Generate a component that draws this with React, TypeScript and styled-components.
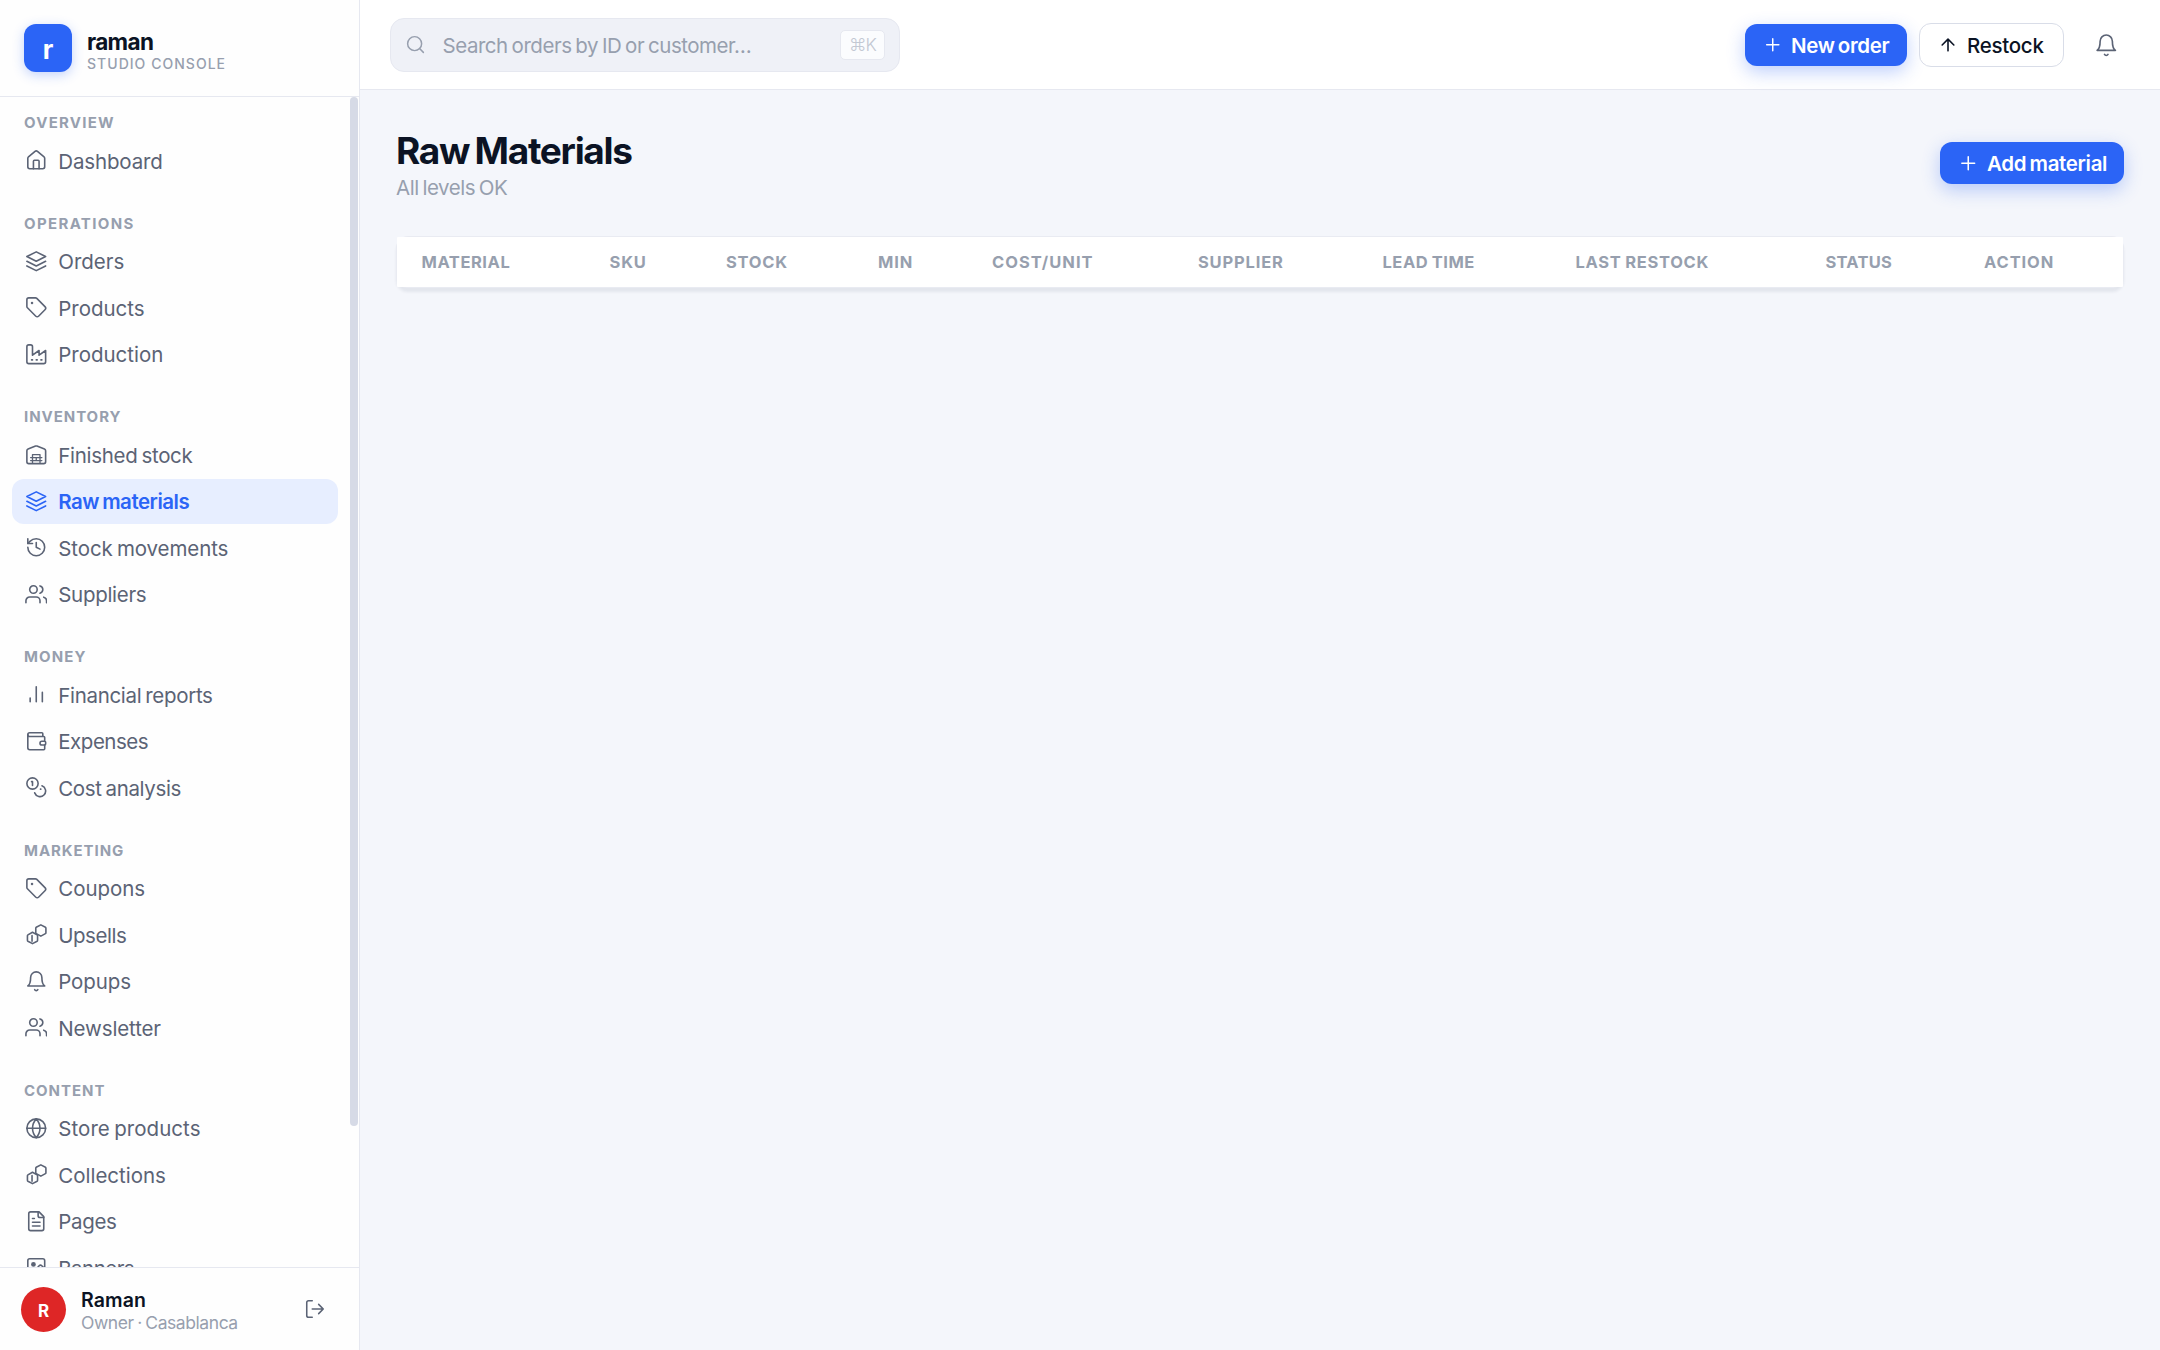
import React from "react";
import styled, { createGlobalStyle, css } from "styled-components";

const color = {
  ink: "#0b1324",
  text: "#5b6375",
  muted: "#979fae",
  blue: "#2b64f6",
  line: "#e6e8f0",
  page: "#f4f6fb",
};

const Global = createGlobalStyle`
  *, *::before, *::after { box-sizing: border-box; }
  body {
    margin: 0;
    background: ${color.page};
    color: ${color.ink};
    font-family: Inter, "Open Sans", "DejaVu Sans", sans-serif;
    -webkit-font-smoothing: antialiased;
  }
`;

/* ---------- icons ---------- */

type IconName =
  | "home" | "layers" | "tag" | "factory" | "warehouse" | "history" | "users" | "chart"
  | "wallet" | "coins" | "boxes" | "bell" | "globe" | "file" | "image" | "logout"
  | "search" | "plus" | "arrowUp";

const shapes: Record<IconName, React.ReactNode> = {
  home: (
    <>
      <path d="M15 21v-8a1 1 0 0 0-1-1h-4a1 1 0 0 0-1 1v8" />
      <path d="M3 10a2 2 0 0 1 .7-1.5l7-6a2 2 0 0 1 2.6 0l7 6A2 2 0 0 1 21 10v9a2 2 0 0 1-2 2H5a2 2 0 0 1-2-2z" />
    </>
  ),
  layers: (
    <>
      <path d="M12 2 2 7l10 5 10-5-10-5z" />
      <path d="m2 12 10 5 10-5" />
      <path d="m2 17 10 5 10-5" />
    </>
  ),
  tag: (
    <>
      <path d="M12.59 2.59A2 2 0 0 0 11.17 2H4a2 2 0 0 0-2 2v7.17a2 2 0 0 0 .59 1.42l8.7 8.7a2.43 2.43 0 0 0 3.42 0l6.58-6.58a2.43 2.43 0 0 0 0-3.42z" />
      <circle cx="7.5" cy="7.5" r=".5" fill="currentColor" />
    </>
  ),
  factory: (
    <>
      <path d="M2 20a2 2 0 0 0 2 2h16a2 2 0 0 0 2-2V8l-7 5V8l-7 5V4a2 2 0 0 0-2-2H4a2 2 0 0 0-2 2Z" />
      <path d="M17 18h1M12 18h1M7 18h1" />
    </>
  ),
  warehouse: (
    <>
      <path d="M22 8.35V20a2 2 0 0 1-2 2H4a2 2 0 0 1-2-2V8.35A2 2 0 0 1 3.26 6.5l8-3.2a2 2 0 0 1 1.48 0l8 3.2A2 2 0 0 1 22 8.35Z" />
      <path strokeWidth="1.4" d="M8 12.3h8M6 15.5h12M6 18.7h12M8 12.3v9M16 12.3v9M12 15.5v3.2" />
    </>
  ),
  history: (
    <>
      <path d="M3 12a9 9 0 1 0 9-9 9.75 9.75 0 0 0-6.74 2.74L3 8" />
      <path d="M3 3v5h5M12 7v5l4 2" />
    </>
  ),
  users: (
    <>
      <path d="M16 21v-2a4 4 0 0 0-4-4H5a4 4 0 0 0-4 4v2" />
      <circle cx="9" cy="7" r="4" />
      <path d="M23 21v-2a4 4 0 0 0-3-3.87M16 3.13a4 4 0 0 1 0 7.75" />
    </>
  ),
  chart: <path d="M18.5 20V10M12 20V4M5.5 20v-4" />,
  wallet: (
    <>
      <path d="M19 7V4a1 1 0 0 0-1-1H5a2 2 0 0 0 0 4h15a1 1 0 0 1 1 1v4h-3a2 2 0 0 0 0 4h3a1 1 0 0 0 1-1v-2a1 1 0 0 0-1-1" />
      <path d="M3 5v14a2 2 0 0 0 2 2h15a1 1 0 0 0 1-1v-4" />
    </>
  ),
  coins: (
    <>
      <circle cx="8" cy="8" r="6" />
      <path d="M18.09 10.37A6 6 0 1 1 10.34 18M7 6h1v4M16.5 14h.4" />
    </>
  ),
  boxes: (
    <>
      <path d="m8 9.9-4.9 2.8a1 1 0 0 0-.5.9v4.9a1 1 0 0 0 .5.9L8 22l4.9-2.6a1 1 0 0 0 .5-.9v-4.9a1 1 0 0 0-.5-.9Z" />
      <path d="m16.9 2-4.9 2.6a1 1 0 0 0-.5.9v4.9a1 1 0 0 0 .5.9l4.9 2.7 4.9-2.7a1 1 0 0 0 .5-.9V5.5a1 1 0 0 0-.5-.9Z" />
      <path d="M7.500 13.500v6" />
    </>
  ),
  bell: (
    <>
      <path d="M6 8a6 6 0 0 1 12 0c0 7 3 9 3 9H3s3-2 3-9" />
      <path d="M10.3 21a1.94 1.94 0 0 0 3.4 0" />
    </>
  ),
  globe: (
    <>
      <circle cx="12" cy="12" r="10" />
      <path d="M2 12h20M12 2a15.3 15.3 0 0 1 4 10 15.3 15.3 0 0 1-4 10 15.3 15.3 0 0 1-4-10 15.3 15.3 0 0 1 4-10z" />
    </>
  ),
  file: (
    <>
      <path d="M15 2H6a2 2 0 0 0-2 2v16a2 2 0 0 0 2 2h12a2 2 0 0 0 2-2V7Z" />
      <path d="M14 2v4a2 2 0 0 0 2 2h4M10 9H8M16 13H8M16 17H8" />
    </>
  ),
  image: (
    <>
      <rect x="3" y="3" width="18" height="18" rx="2" />
      <circle cx="9" cy="9" r="1.7" fill="currentColor" />
      <path d="m21 13.5-3.09-3.09a2 2 0 0 0-2.82 0L6 21" />
    </>
  ),
  logout: <path d="M9 21H5a2 2 0 0 1-2-2V5a2 2 0 0 1 2-2h4M16 17l5-5-5-5M21 12H9" />,
  search: (
    <>
      <circle cx="11" cy="11" r="8" />
      <path d="m21 21-4.35-4.35" />
    </>
  ),
  plus: <path d="M4.5 12h15M12 4.5v15" />,
  arrowUp: <path d="m5 12 7-7 7 7M12 19V5" />,
};

const Svg = styled.svg`
  display: block;
  flex: none;
  fill: none;
  stroke: currentColor;
  stroke-linecap: round;
  stroke-linejoin: round;
`;

const Icon = ({ name, size = 22.5, weight = 1.7 }: { name: IconName; size?: number; weight?: number }) => (
  <Svg width={size} height={size} viewBox="0 0 24 24" strokeWidth={weight}>
    {shapes[name]}
  </Svg>
);

/* ---------- shell ---------- */

const Shell = styled.div`
  display: grid;
  grid-template-columns: 360px 1fr;
  height: 1350px;
  overflow: hidden;
`;

const Sidebar = styled.aside`
  display: flex;
  flex-direction: column;
  min-height: 0;
  background: #fefefe;
  border-right: 1.5px solid ${color.line};
`;

const Brand = styled.div`
  display: flex;
  flex: none;
  gap: 15px;
  height: 97px;
  padding: 24px 24px 0;
  border-bottom: 1px solid ${color.line};
`;

const Logo = styled.div`
  width: 48px;
  height: 48px;
  border-radius: 12px;
  background: ${color.blue};
  box-shadow: 0 3px 12px rgba(43, 100, 246, 0.28);
  color: #fff;
  font-size: 26px;
  font-weight: 700;
  line-height: 52px;
  text-align: center;
`;

const BrandText = styled.div`
  padding-top: 5px;
`;

const BrandName = styled.div`
  font-size: 22.5px;
  font-weight: 700;
  line-height: 25px;
  letter-spacing: -0.65px;
`;

const BrandTag = styled.div`
  color: ${color.muted};
  font-size: 14px;
  font-weight: 550;
  line-height: 20px;
  letter-spacing: 1.03px;
`;

const NavArea = styled.div`
  display: flex;
  flex: 1;
  min-height: 0;
  overflow: hidden;
`;

const NavList = styled.nav`
  flex: 1;
  padding: 9px 12px 0;
`;

const ScrollTrack = styled.div`
  width: 9px;
`;

const ScrollThumb = styled.div`
  width: 8px;
  height: 1029px;
  border-radius: 4px;
  background: #d6dae6;
`;

const Group = styled.section`
  display: flex;
  flex-direction: column;
  gap: 1.5px;
  margin-bottom: 23.5px;
`;

const GroupLabel = styled.h2<{ $track: number }>`
  margin: 0 0 -1.5px;
  padding: 1px 0 0 12px;
  color: ${color.muted};
  font-size: 15px;
  font-weight: 700;
  line-height: 31px;
  letter-spacing: ${(p) => p.$track}px;
`;

const NavItem = styled.a<{ $active?: boolean; $track: number }>`
  display: flex;
  align-items: center;
  gap: 11px;
  width: 325.5px;
  height: 45px;
  padding-left: 12.75px;
  border-radius: 12px;
  color: ${color.text};
  font-size: 20.5px;
  font-weight: 380;
  letter-spacing: ${(p) => p.$track + 0.04}px;
  word-spacing: -1.5px;
  white-space: nowrap;
  ${(p) =>
    p.$active &&
    css`
      background: #e7eeff;
      color: ${color.blue};
      font-weight: 600;
    `}
`;

const NavText = styled.span`
  padding-top: 1px;
`;

const Account = styled.div`
  display: flex;
  flex: none;
  align-items: center;
  height: 83px;
  padding: 0 33.5px 0 21px;
  border-top: 1px solid ${color.line};
`;

const Avatar = styled.div`
  width: 45px;
  height: 45px;
  border-radius: 50%;
  background: #de2626;
  color: #fff;
  font-size: 17px;
  font-weight: 700;
  line-height: 48px;
  text-align: center;
`;

const AccountText = styled.div`
  flex: 1;
  padding: 5px 0 0 15px;
`;

const AccountName = styled.div`
  font-size: 19.5px;
  font-weight: 600;
  line-height: 22px;
  letter-spacing: 0.1px;
`;

const AccountRole = styled.div`
  color: ${color.muted};
  font-size: 17.5px;
  font-weight: 380;
  line-height: 23px;
  letter-spacing: -0.43px;
  word-spacing: -1px;
`;

const IconButton = styled.button`
  display: flex;
  padding: 0;
  border: 0;
  background: none;
  color: ${color.text};
`;

/* ---------- top bar ---------- */

const Content = styled.div`
  display: flex;
  flex-direction: column;
`;

const TopBar = styled.header`
  display: flex;
  flex: none;
  align-items: center;
  gap: 12px;
  height: 89.5px;
  padding: 1px 42px 0 30px;
  background: #fff;
  border-bottom: 1.5px solid ${color.line};
`;

const Search = styled.div`
  display: flex;
  align-items: center;
  width: 510px;
  height: 54px;
  margin-right: auto;
  padding: 0 14px;
  border: 1.5px solid #e6e8f0;
  border-radius: 14px;
  background: #eff1f7;
  color: ${color.muted};
`;

const SearchHint = styled.span`
  flex: 1;
  padding: 1px 0 0 16.5px;
  font-size: 20.5px;
  font-weight: 380;
  letter-spacing: -0.46px;
  word-spacing: -1.5px;
  white-space: nowrap;
`;

const Shortcut = styled.kbd`
  width: 45px;
  height: 30px;
  border: 1.5px solid #e6e8f0;
  border-radius: 5px;
  background: #fbfcfe;
  color: #c3c8d3;
  font-family: inherit;
  font-size: 17.5px;
  font-weight: 350;
  line-height: 27px;
  letter-spacing: -0.8px;
  text-align: center;
`;

const Button = styled.button<{ $outline?: boolean; $width: number; $track: number }>`
  display: flex;
  align-items: center;
  gap: 9px;
  width: ${(p) => p.$width}px;
  height: 42px;
  padding: 0 0 0 18px;
  border: 0;
  border-radius: 12px;
  background: ${color.blue};
  box-shadow: 0 6px 18px rgba(43, 100, 246, 0.3);
  color: #fff;
  font-family: inherit;
  font-size: 20.5px;
  font-weight: 600;
  letter-spacing: ${(p) => p.$track}px;
  word-spacing: -1.5px;
  white-space: nowrap;
  ${(p) =>
    p.$outline &&
    css`
      height: 44.5px;
      padding-left: 18px;
      border: 1.5px solid #d9dde8;
      background: #fff;
      box-shadow: none;
      color: ${color.ink};
      font-weight: 550;
    `}
`;

const ButtonText = styled.span`
  padding-top: 1px;
`;

const BellSlot = styled.div`
  display: flex;
  justify-content: center;
  width: 24px;
  margin-left: 18px;
`;

/* ---------- page ---------- */

const Page = styled.main`
  display: flex;
  flex-direction: column;
  gap: 35px;
  padding: 36px;
`;

const PageHead = styled.div`
  display: flex;
  align-items: center;
  justify-content: space-between;
  height: 75px;
`;

const Title = styled.h1`
  margin: 0;
  font-size: 37px;
  font-weight: 680;
  line-height: 49px;
  letter-spacing: -1.3px;
  word-spacing: -2px;
`;

const Subtitle = styled.p`
  margin: 0;
  color: ${color.muted};
  font-size: 20.5px;
  font-weight: 380;
  line-height: 25px;
  letter-spacing: -0.47px;
  word-spacing: -1.5px;
`;

const Card = styled.div`
  padding: 1px;
  border-radius: 12px;
  background: #e9ebf2;
  box-shadow: 0 4px 3px rgba(20, 30, 60, 0.07);
`;

const Columns = styled.div`
  display: grid;
  grid-template-columns: 188px 116.5px 152px 114px 206px 184.5px 193px 250px 158.5px 1fr;
  height: 50px;
  padding: 1.5px 0 0 24.5px;
  border-radius: 1px;
  background: #fff;
`;

const ColumnHead = styled.div<{ $track: number }>`
  color: ${color.muted};
  font-size: 16.5px;
  font-weight: 700;
  line-height: 48px;
  letter-spacing: ${(p) => p.$track}px;
  word-spacing: -1px;
  white-space: nowrap;
`;

/* ---------- data ---------- */

type Entry = { icon: IconName; label: string; track: number; active?: boolean };

const groups: { label: string; track: number; items: Entry[] }[] = [
  { label: "OVERVIEW", track: 1.24, items: [{ icon: "home", label: "Dashboard", track: -0.19 }] },
  {
    label: "OPERATIONS",
    track: 1.35,
    items: [
      { icon: "layers", label: "Orders", track: -0.05 },
      { icon: "tag", label: "Products", track: -0.06 },
      { icon: "factory", label: "Production", track: -0.06 },
    ],
  },
  {
    label: "INVENTORY",
    track: 0.95,
    items: [
      { icon: "warehouse", label: "Finished stock", track: -0.34 },
      { icon: "layers", label: "Raw materials", track: -0.54, active: true },
      { icon: "history", label: "Stock movements", track: -0.13 },
      { icon: "users", label: "Suppliers", track: -0.34 },
    ],
  },
  {
    label: "MONEY",
    track: 1.11,
    items: [
      { icon: "chart", label: "Financial reports", track: -0.36 },
      { icon: "wallet", label: "Expenses", track: -0.52 },
      { icon: "coins", label: "Cost analysis", track: -0.4 },
    ],
  },
  {
    label: "MARKETING",
    track: 0.93,
    items: [
      { icon: "tag", label: "Coupons", track: -0.1 },
      { icon: "boxes", label: "Upsells", track: -0.52 },
      { icon: "bell", label: "Popups", track: -0.15 },
      { icon: "users", label: "Newsletter", track: -0.16 },
    ],
  },
  {
    label: "CONTENT",
    track: 0.98,
    items: [
      { icon: "globe", label: "Store products", track: 0.02 },
      { icon: "boxes", label: "Collections", track: -0.05 },
      { icon: "file", label: "Pages", track: -0.38 },
      { icon: "image", label: "Banners", track: -0.58 },
    ],
  },
];

const columns: [string, number][] = [
  ["MATERIAL", 0.55],
  ["SKU", 0.85],
  ["STOCK", 0.75],
  ["MIN", 0.9],
  ["COST/UNIT", 0.99],
  ["SUPPLIER", 0.82],
  ["LEAD TIME", 0.54],
  ["LAST RESTOCK", 0.71],
  ["STATUS", 0.25],
  ["ACTION", 0.9],
];

export default function App() {
  return (
    <>
      <Global />
      <Shell>
        <Sidebar>
          <Brand>
            <Logo>r</Logo>
            <BrandText>
              <BrandName>raman</BrandName>
              <BrandTag>STUDIO CONSOLE</BrandTag>
            </BrandText>
          </Brand>
          <NavArea>
            <NavList>
              {groups.map((group) => (
                <Group key={group.label}>
                  <GroupLabel $track={group.track}>{group.label}</GroupLabel>
                  {group.items.map((item) => (
                    <NavItem key={item.label} $active={item.active} $track={item.track}>
                      <Icon name={item.icon} />
                      <NavText>{item.label}</NavText>
                    </NavItem>
                  ))}
                </Group>
              ))}
            </NavList>
            <ScrollTrack>
              <ScrollThumb />
            </ScrollTrack>
          </NavArea>
          <Account>
            <Avatar>R</Avatar>
            <AccountText>
              <AccountName>Raman</AccountName>
              <AccountRole>Owner · Casablanca</AccountRole>
            </AccountText>
            <IconButton aria-label="Log out">
              <Icon name="logout" size={22} />
            </IconButton>
          </Account>
        </Sidebar>
        <Content>
          <TopBar>
            <Search>
              <Icon name="search" size={21} />
              <SearchHint>Search orders by ID or customer…</SearchHint>
              <Shortcut>⌘K</Shortcut>
            </Search>
            <Button $width={162.5} $track={-0.35}>
              <Icon name="plus" size={19.5} weight={1.8} />
              <ButtonText>New order</ButtonText>
            </Button>
            <Button $outline $width={145} $track={-0.28}>
              <Icon name="arrowUp" size={20} weight={1.9} />
              <ButtonText>Restock</ButtonText>
            </Button>
            <BellSlot>
              <IconButton aria-label="Notifications">
                <Icon name="bell" size={24.5} weight={1.6} />
              </IconButton>
            </BellSlot>
          </TopBar>
          <Page>
            <PageHead>
              <div>
                <Title>Raw Materials</Title>
                <Subtitle>All levels OK</Subtitle>
              </div>
              <Button $width={184.5} $track={-0.33}>
                <Icon name="plus" size={20.5} weight={1.8} />
                <ButtonText>Add material</ButtonText>
              </Button>
            </PageHead>
            <Card>
              <Columns>
                {columns.map(([label, track]) => (
                  <ColumnHead key={label} $track={track}>
                    {label}
                  </ColumnHead>
                ))}
              </Columns>
            </Card>
          </Page>
        </Content>
      </Shell>
    </>
  );
}
